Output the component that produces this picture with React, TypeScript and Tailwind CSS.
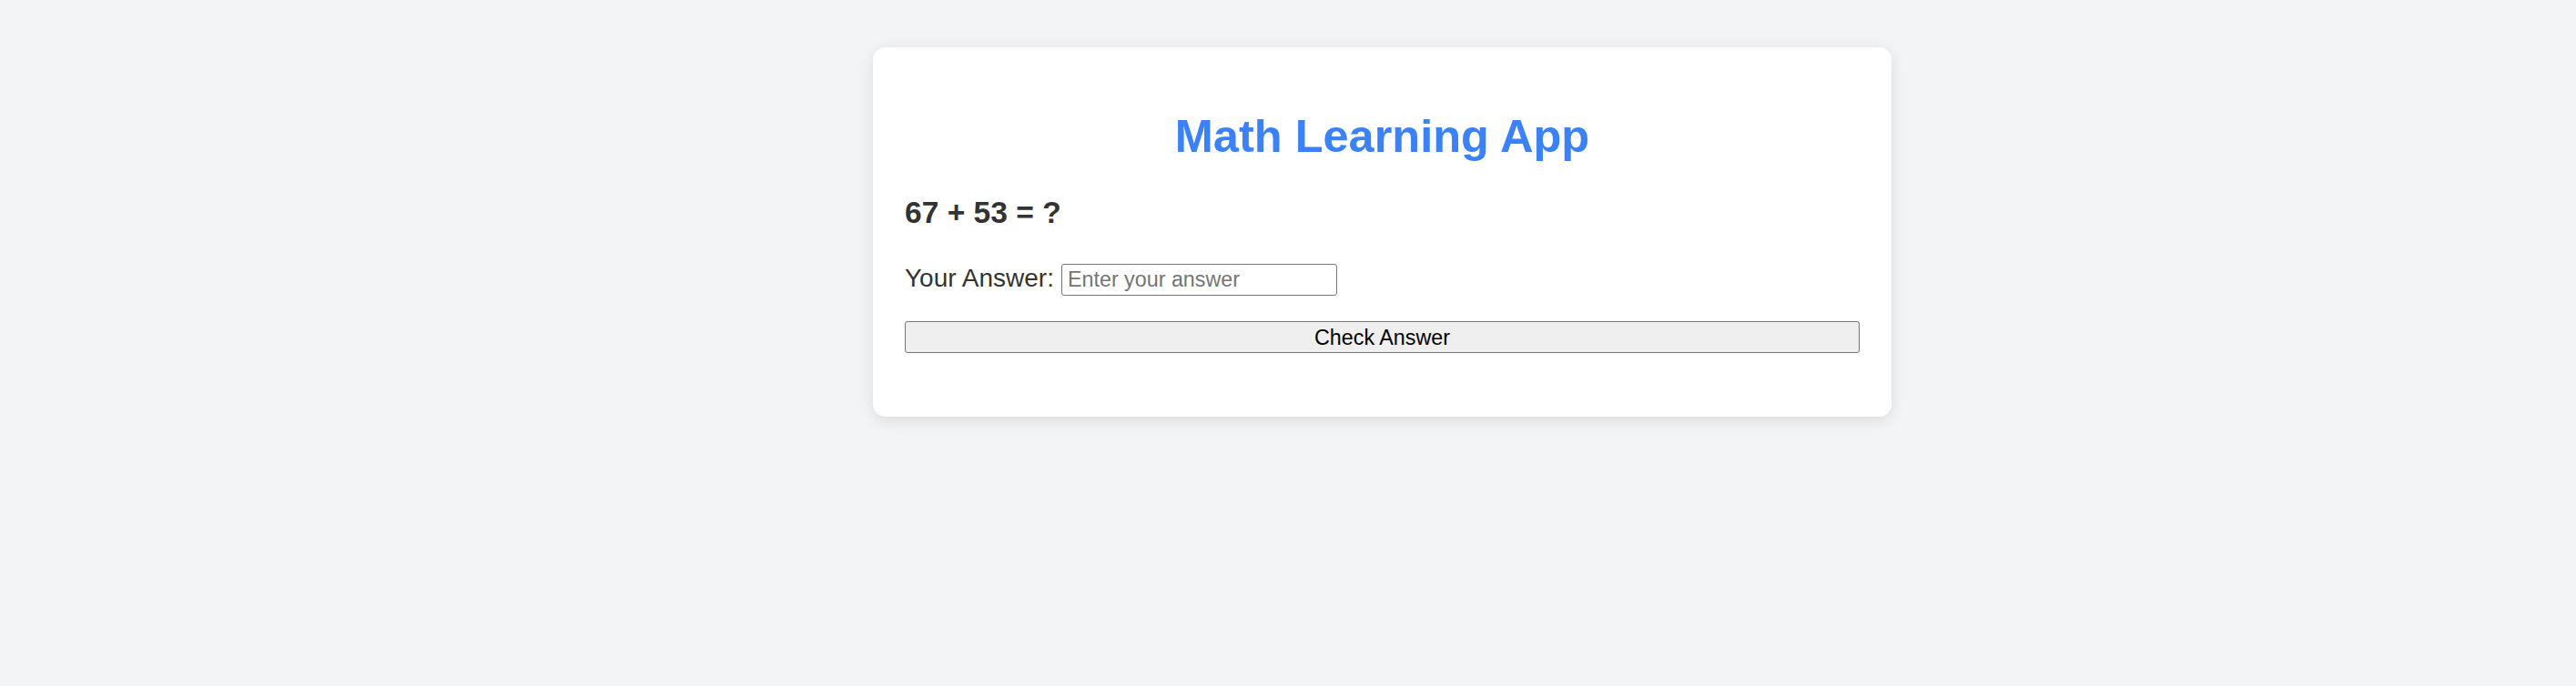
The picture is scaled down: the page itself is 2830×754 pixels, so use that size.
import React, { useState } from 'react'

function App() {
  const [answer, setAnswer] = useState('')

  return (
    <div className="min-h-screen bg-[#f3f4f6] pt-[52px] font-['Liberation_Sans',Arial,sans-serif]">
      <div className="ml-[959px] w-[1119px] rounded-[14px] bg-white px-[35px] pt-[35px] pb-[35px] shadow-[0_4px_18px_rgba(0,0,0,0.1)]">
        <h1 className="mt-[35px] text-center text-[50.5px] leading-[56px] font-bold text-[#3b82f6]">
          Math Learning App
        </h1>

        <div className="mt-[36px] text-[33.6px] leading-[39px] font-bold text-[#333333]">67 + 53 = ?</div>

        <div className="mt-[37px] flex items-start gap-[8px]">
          <label htmlFor="answer" className="text-[28px] leading-[32px] text-[#333333]">
            Your Answer:
          </label>
          <input
            id="answer"
            type="text"
            value={answer}
            onChange={(e) => setAnswer(e.target.value)}
            placeholder="Enter your answer"
            className="h-[35px] w-[303px] rounded-[3px] border border-[#767676] bg-white pl-[6px] text-[23.3px] text-black outline-none placeholder:text-[#757575]"
          />
        </div>

        <button className="mt-[28px] mb-[35px] block h-[35px] w-full rounded-[3px] border border-[#767676] bg-[#efefef] text-center text-[23.3px] text-black">
          Check Answer
        </button>
      </div>
    </div>
  )
}

export default App
